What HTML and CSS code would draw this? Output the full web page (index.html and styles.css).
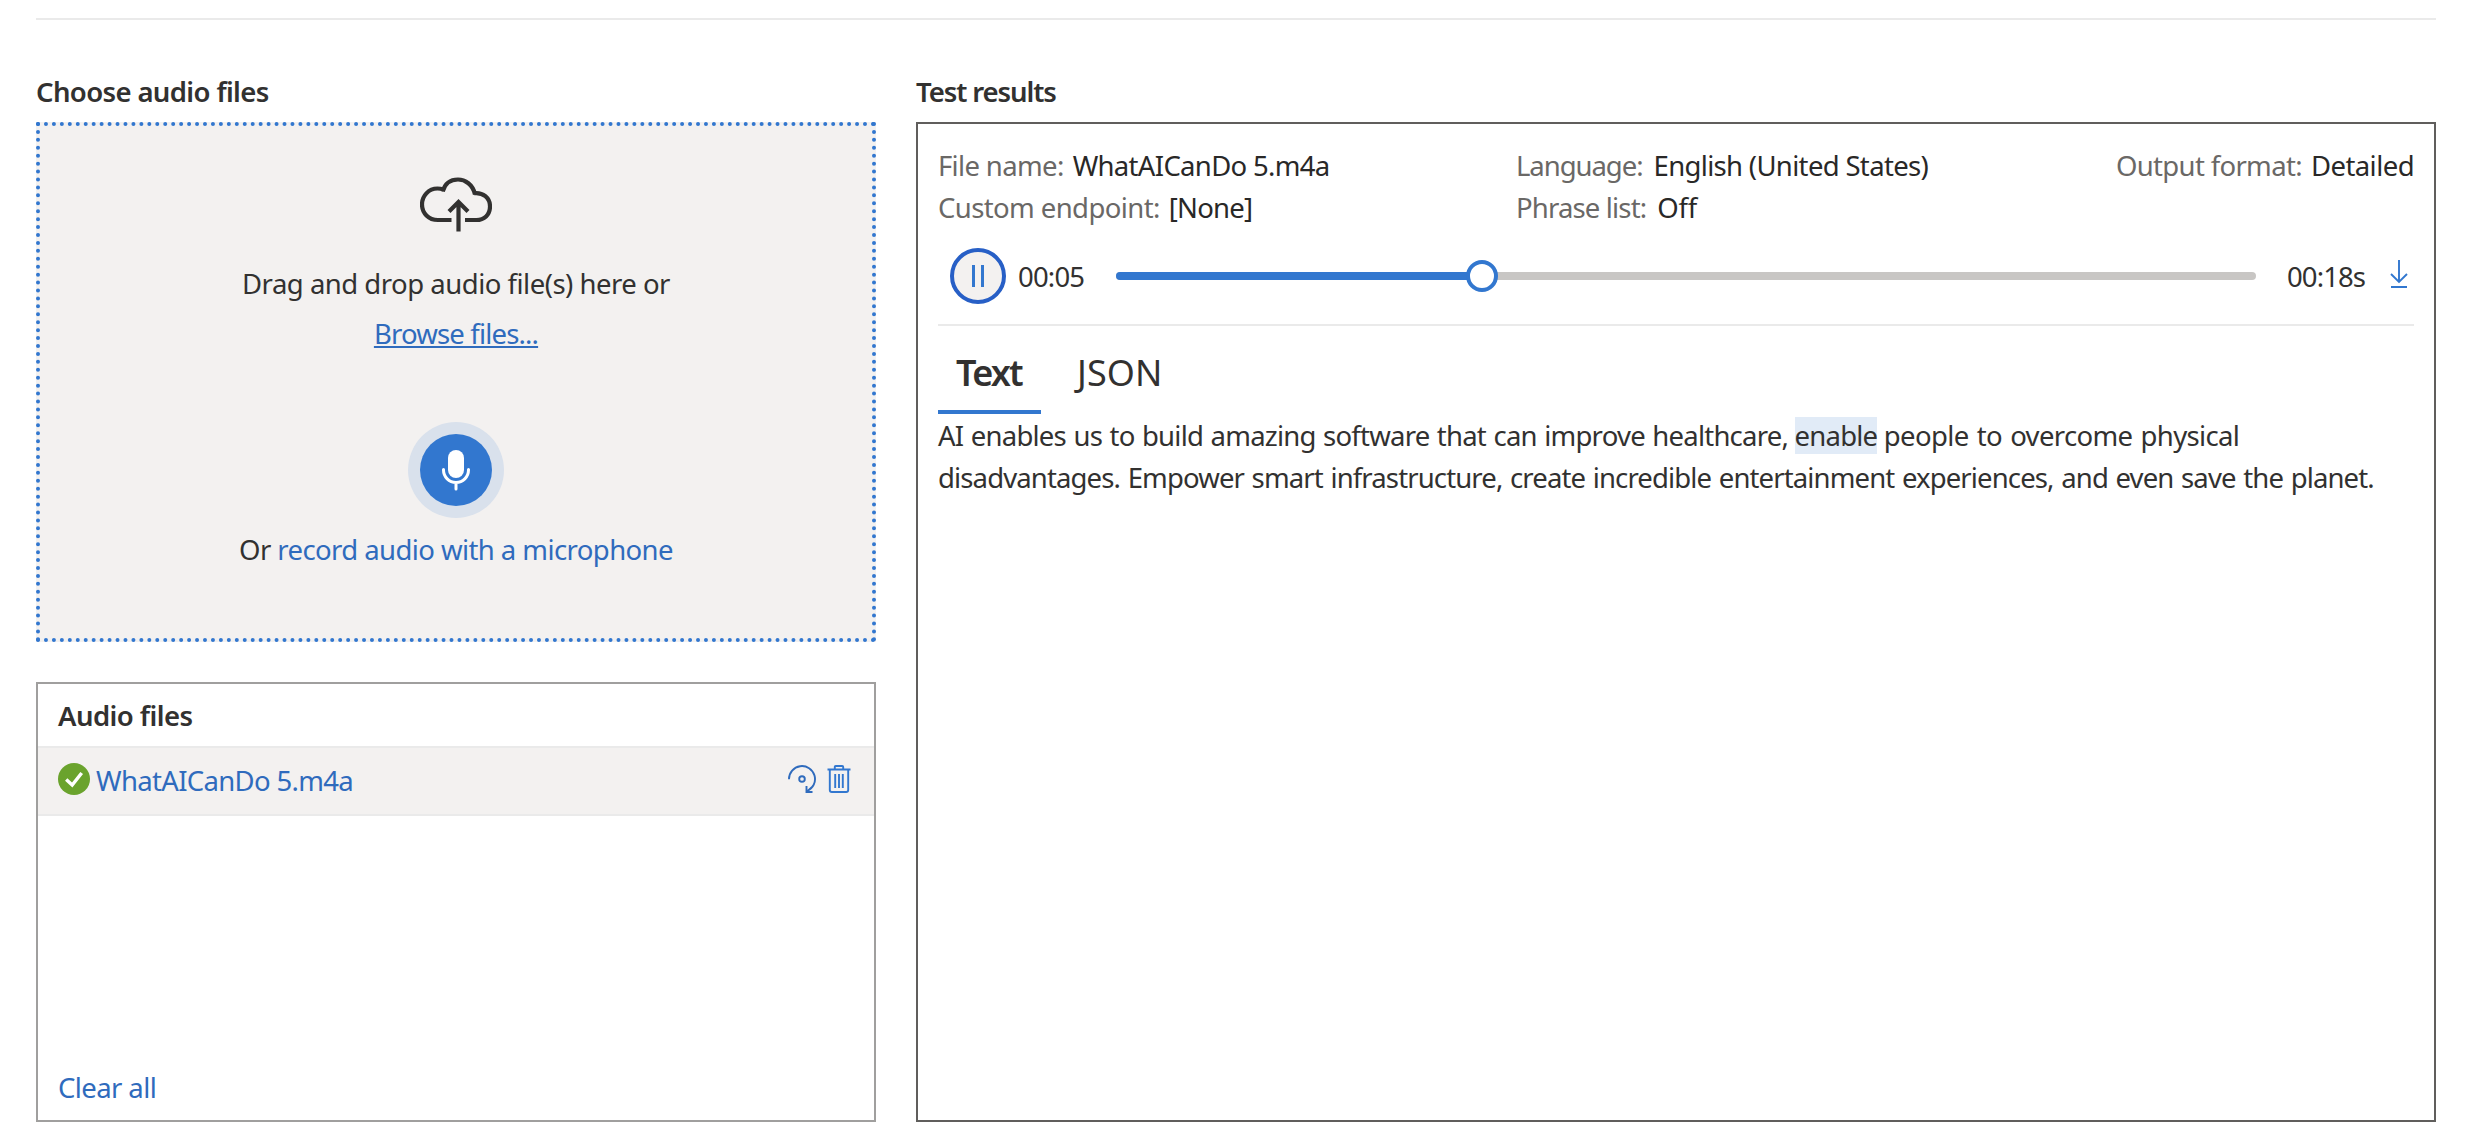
FILE: index.html
```html
<!DOCTYPE html>
<html lang="en">
<head>
<meta charset="utf-8">
<title>Speech to text</title>
<link rel="stylesheet" href="styles.css">
</head>
<body>
<main class="page">
  <section class="sources">
    <h2 class="heading heading-choose">Choose audio files</h2>
    <div class="dropzone">
      <svg class="cloud" viewBox="0 -1 72 56" fill="none" stroke="#323130" stroke-width="4.200">
        <path d="M31.5 43H18C8.500 43 2 36 2 27.500S8.500 11.500 17.500 11.500Q20.500 11.500 23.500 12.500"/>
        <path d="M22.700 14.500C25 6 31 2.500 38 2.500s15 5 17 15"/>
        <path d="M54 16.200C63 15 70 21 70 29.500S64 43 56.500 43H45"/>
        <path d="M38.500 54.500V25M29 34.500l9.500-9.500 9.500 9.500"/>
      </svg>
      <p class="drag">Drag and drop audio file(s) here or</p>
      <a class="browse">Browse files...</a>
      <div class="mic">
        <svg viewBox="0 0 72 72" width="72" height="72">
          <rect x="28" y="16" width="16" height="28" rx="8" fill="#fff"/>
          <path d="M23.500 35.500V36a12.500 12.500 0 0 0 25 0v-.5M36 48.500V55" fill="none" stroke="#fff" stroke-width="3" stroke-linecap="round"/>
        </svg>
      </div>
      <p class="record">Or <a>record audio with a microphone</a></p>
    </div>
    <div class="files">
      <h3 class="files-title">Audio files</h3>
      <div class="file">
        <svg class="check" viewBox="0 0 32 32"><circle cx="16" cy="16" r="16" fill="#6aa32d"/><path d="M8.200 16.500l6 5.500 9.500-12" fill="none" stroke="#fff" stroke-width="3.400"/></svg>
        <a class="file-name">WhatAICanDo 5.m4a</a>
        <svg class="redo" viewBox="0 0 28 28" fill="none" stroke="#2f6bbd" stroke-width="1.900">
          <path d="M1 14.200A13 13 0 1 1 19.200 26M18.500 21v6h6M18.800 26.800l5-4.500"/><circle cx="14" cy="14" r="2.800"/>
        </svg>
        <svg class="trash" viewBox="0 0 24 28" fill="none" stroke="#3277cf" stroke-width="1.900">
          <path d="M.5 4.500h23M7.800 4.500V2q0-1 1-1h6.400q1 0 1 1v2.500M2.800 4.500V25q0 2 2 2h14.400q2 0 2-2V4.500M8.200 9v14M12 9v14M15.800 9v14"/>
        </svg>
      </div>
      <a class="clear">Clear all</a>
    </div>
  </section>
  <section class="results">
    <h2 class="heading heading-results">Test results</h2>
    <div class="panel">
      <dl class="meta">
        <div class="pair"><dt class="k-file">File name:</dt><dd class="v-file">WhatAICanDo 5.m4a</dd></div>
        <div class="pair pair-mid"><dt class="k-lang">Language:</dt><dd class="v-lang">English (United States)</dd></div>
        <div class="pair pair-end"><dt class="k-out">Output format:</dt><dd class="v-out">Detailed</dd></div>
        <div class="pair"><dt class="k-end">Custom endpoint:</dt><dd class="v-end">[None]</dd></div>
        <div class="pair pair-mid"><dt class="k-phrase">Phrase list:</dt><dd class="v-phrase">Off</dd></div>
      </dl>
      <div class="player">
        <div class="pause"><i></i><i></i></div>
        <span class="time">00:05</span>
        <div class="track"><div class="played"></div><div class="thumb"></div></div>
        <span class="total">00:18s</span>
        <svg class="download" viewBox="0 0 18 28" fill="none" stroke="#3277cf" stroke-width="1.900"><path d="M9 0v22M1 14l8 8 8-8M1 27h16"/></svg>
      </div>
      <div class="tabs"><span class="tab active">Text</span><span class="tab">JSON</span></div>
      <p class="transcript"><span class="t1">AI enables us to build amazing software that can improve healthcare,</span> <mark>enable</mark> <span class="t2">people to overcome physical</span><br><span class="t3">disadvantages. Empower smart infrastructure, create incredible entertainment experiences, and even save the planet.</span></p>
    </div>
  </section>
</main>
</body>
</html>
```
FILE: styles.css
```css
* { box-sizing: border-box; margin: 0; padding: 0; }
body { background: #fff; color: #323130; font: 27.5px/42px "Noto Sans", "Open Sans", sans-serif; letter-spacing: -.6px; white-space: nowrap; }
svg { display: block; flex: none; }
a { color: #2f6bbd; }
.page { display: grid; grid-template-columns: 840px 1520px; column-gap: 40px; width: 2400px; height: 1104px; margin: 18px 0 0 36px; padding-top: 51px; border-top: 2px solid #eaeaea; }
.heading { height: 51px; line-height: 42px; font-size: 27.5px; font-weight: 600; }
.heading-choose { letter-spacing: -.63px; }
.heading-results { letter-spacing: -1.08px; }

.dropzone { display: flex; flex-direction: column; align-items: center; height: 520px; border: 4px dotted #3277cf; background: #f3f1f0; padding-top: 50px; }
.cloud { width: 72px; height: 56px; }
.drag { margin-top: 31px; letter-spacing: -.5px; }
.browse { margin-top: 8px; letter-spacing: -.83px; text-decoration: underline; text-decoration-thickness: 2px; text-underline-offset: 2px; text-decoration-skip-ink: none; }
.mic { margin-top: 67px; width: 96px; height: 96px; padding: 12px; border-radius: 50%; background: #d9e1ec; }
.mic svg { border-radius: 50%; background: #3277cf; }
.record { margin-top: 11px; letter-spacing: -.58px; }

.files { display: flex; flex-direction: column; height: 440px; margin-top: 40px; border: 2px solid #a09f9e; }
.files-title { height: 62px; padding: 11px 0 0 20px; font-size: 27.5px; font-weight: 600; letter-spacing: -.55px; }
.file { display: flex; align-items: center; height: 70px; padding: 0 20px; border: solid #eaeaea; border-width: 2px 0; background: #f3f1f0; }
.check { width: 32px; height: 32px; margin-top: -4px; }
.file-name { margin: 0 auto 0 6px; letter-spacing: -.67px; }
.redo { width: 28px; height: 28px; margin: -4px 11px 0 0; }
.trash { width: 24px; height: 28px; margin: -4px 3px 0 0; }
.clear { margin: auto 0 11px 20px; letter-spacing: -.6px; }

.panel { height: 1000px; padding: 21px 20px 0; border: 2px solid #605e5c; }
.meta { display: grid; grid-template-columns: 578px 500px 1fr; }
.pair { display: flex; gap: 9px; }
.pair-mid { gap: 11px; }
.pair-end { justify-content: flex-end; }
dt { color: #6a6866; }
dd { color: #292827; }
.k-file { letter-spacing: -.65px; }
.k-lang { letter-spacing: -1.05px; }
.k-out { letter-spacing: -.66px; }
.k-end { letter-spacing: -.6px; }
.k-phrase { letter-spacing: -.84px; }
.v-file { letter-spacing: -.68px; }
.v-lang { letter-spacing: -.67px; }
.v-out { letter-spacing: -.56px; }
.v-end { letter-spacing: -.75px; }
.v-phrase { letter-spacing: -.2px; }

.player { display: flex; align-items: center; height: 97px; border-bottom: 2px solid #eaeaea; padding: 0 6px 1px 12px; }
.pause { display: flex; justify-content: center; align-items: center; gap: 6px; width: 56px; height: 56px; border: 4px solid #275fc6; border-radius: 50%; background: #f3f1f0; }
.pause i { width: 3px; height: 22px; background: #3277cf; }
.time { width: 98px; margin-left: 12px; padding-top: 2px; letter-spacing: -.8px; }
.track { position: relative; width: 1140px; height: 8px; border-radius: 4px; background: #c8c6c4; }
.played { width: 366px; height: 8px; border-radius: 4px; background: #3277cf; }
.thumb { position: absolute; left: 350px; top: -12px; width: 32px; height: 32px; border: 4px solid #3277cf; border-radius: 50%; background: #fff; }
.total { margin: 0 auto 0 31px; padding-top: 2px; letter-spacing: -.9px; }
.download { width: 18px; height: 28px; margin-top: -4px; }

.tabs { display: flex; height: 88px; font-size: 36px; line-height: 94px; }
.tab { padding: 0 20px; letter-spacing: .1px; }
.tab.active { width: 103px; padding: 0 18px; margin-right: 16px; border-bottom: 4px solid #3277cf; font-weight: 600; letter-spacing: -1.8px; }
.transcript { height: 85px; padding-top: 1px; }
.t1 { letter-spacing: -.78px; word-spacing: 1.1px; }
.t2 { letter-spacing: -.65px; word-spacing: 1.7px; }
.t3 { letter-spacing: -.87px; word-spacing: 1.3px; }
mark { color: inherit; background: #e1ebf7; letter-spacing: -.8px; }
```
